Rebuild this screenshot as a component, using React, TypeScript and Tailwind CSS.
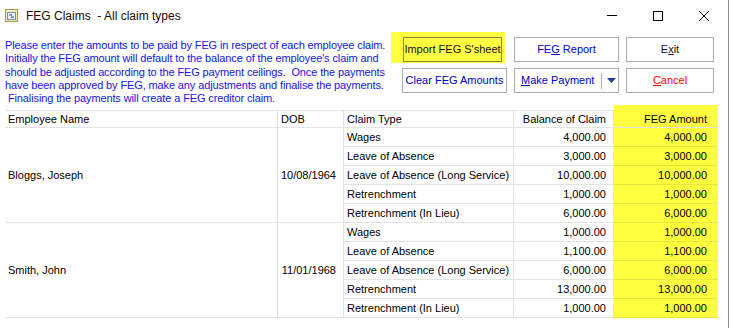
import React from "react";

interface Claim {
  type: string;
  balance: string;
  feg: string;
}

interface Employee {
  name: string;
  dob: string;
  claims: Claim[];
}

const EMPLOYEES: Employee[] = [
  {
    name: "Bloggs, Joseph",
    dob: "10/08/1964",
    claims: [
      { type: "Wages", balance: "4,000.00", feg: "4,000.00" },
      { type: "Leave of Absence", balance: "3,000.00", feg: "3,000.00" },
      { type: "Leave of Absence (Long Service)", balance: "10,000.00", feg: "10,000.00" },
      { type: "Retrenchment", balance: "1,000.00", feg: "1,000.00" },
      { type: "Retrenchment (In Lieu)", balance: "6,000.00", feg: "6,000.00" },
    ],
  },
  {
    name: "Smith, John",
    dob: "11/01/1968",
    claims: [
      { type: "Wages", balance: "1,000.00", feg: "1,000.00" },
      { type: "Leave of Absence", balance: "1,100.00", feg: "1,100.00" },
      { type: "Leave of Absence (Long Service)", balance: "6,000.00", feg: "6,000.00" },
      { type: "Retrenchment", balance: "13,000.00", feg: "13,000.00" },
      { type: "Retrenchment (In Lieu)", balance: "1,000.00", feg: "1,000.00" },
    ],
  },
];

const INSTRUCTIONS = [
  "Please enter the amounts to be paid by FEG in respect of each employee claim.",
  "Initially the FEG amount will default to the balance of the employee's claim and",
  "should be adjusted according to the FEG payment ceilings.  Once the payments",
  "have been approved by FEG, make any adjustments and finalise the payments.",
  " Finalising the payments will create a FEG creditor claim.",
];

const btn =
  "h-[25px] border border-[#adadad] bg-white flex items-center justify-center text-[#0000c8]";

export default function App() {
  return (
    <div className="w-[729px] h-[328px] overflow-hidden bg-white border-r border-[#8c8c8c] font-['Liberation_Sans',Tahoma,sans-serif] text-[11px] text-black">
      <TitleBar />

      <div className="flex h-[79px]">
        <div className="w-[391px] pl-[5px] pt-[8px] text-[#1515e6] leading-[13.3px] tracking-[-0.12px] whitespace-pre">
          {INSTRUCTIONS.map((line) => (
            <div key={line}>{line}</div>
          ))}
        </div>

        <div className="flex flex-col">
          <div className="flex items-start pt-[1px]">
            <div className="bg-[#ffff40] pl-[12px] pr-[3px] pt-[5px] pb-[1px]">
              <button className="h-[25px] w-[99px] border border-[#8a8a3a] flex items-center justify-center text-[#101020]">
                Import FEG S'sheet
              </button>
            </div>
            <button className={`${btn} w-[105px] ml-[9px] mt-[5px]`}>
              FE<u>G</u>&nbsp;Report
            </button>
            <button className={`${btn} w-[88px] ml-[7px] mt-[5px] text-[#101020]`}>
              E<u>x</u>it
            </button>
          </div>

          <div className="flex mt-[5px] pl-[11px]">
            <button className={`${btn} w-[105px]`}>Clear FEG Amounts</button>
            <button className={`${btn} w-[105px] ml-[7px] justify-start pl-[6px]`}>
              <span>
                <u>M</u>ake Payment
              </span>
              <span className="ml-[7px] h-[16px] w-px bg-[#adadad]" />
              <svg width="9" height="5" viewBox="0 0 9 5" className="ml-[5px]">
                <path d="M0 0h9L4.5 5z" fill="#1c3d9c" />
              </svg>
            </button>
            <button className={`${btn} w-[88px] ml-[7px] text-[#ff0000]`}>
              <u>C</u>ancel
            </button>
          </div>
        </div>
      </div>

      <ClaimsTable />
    </div>
  );
}

function TitleBar() {
  return (
    <div className="h-[31px] flex items-center font-['Liberation_Sans',sans-serif] text-[12px]">
      <svg width="13" height="13" viewBox="0 0 13 13" className="ml-[5px]">
        <rect x="0.5" y="0.5" width="12" height="12" fill="#f3e9b8" stroke="#a89a5a" />
        <rect x="2.5" y="3.5" width="8" height="7" fill="#e8eef8" stroke="#7d8fb3" />
        <path d="M4 6h3l-1-1M9 8H6l1 1" stroke="#2e5fc2" fill="none" />
      </svg>
      <span className="ml-[8px] text-[#1a0a0a] whitespace-pre">FEG Claims  - All claim types</span>

      <div className="ml-auto flex items-center">
        <div className="w-[46px] h-[30px] flex items-center justify-center">
          <div className="w-[10px] h-px bg-black" />
        </div>
        <div className="w-[46px] h-[30px] flex items-center justify-center">
          <div className="w-[10px] h-[10px] border border-black" />
        </div>
        <div className="w-[46px] h-[30px] flex items-center justify-center mr-[1px]">
          <svg width="10" height="10" viewBox="0 0 10 10">
            <path d="M0 0L10 10M10 0L0 10" stroke="black" strokeWidth="1" />
          </svg>
        </div>
      </div>
    </div>
  );
}

function ClaimsTable() {
  const cell = "border-r border-b border-[#e3e3e3] h-[19px] px-[3px]";
  return (
    <div className="ml-[5px] w-[713px]">
      <div className="relative flex h-[18px] border-t border-b border-[#e3e3e3] items-center">
        <div className="w-[273px] pl-[3px] border-r border-[#e3e3e3] h-full flex items-center">Employee Name</div>
        <div className="w-[66px] pl-[3px] border-r border-[#e3e3e3] h-full flex items-center">DOB</div>
        <div className="w-[170px] pl-[3px] border-r border-[#e3e3e3] h-full flex items-center">Claim Type</div>
        <div className="w-[100px] pr-[7px] border-r border-[#e3e3e3] h-full flex items-center justify-end">Balance of Claim</div>
        <div className="w-[104px] pr-[11px] h-full flex items-center justify-end bg-[#ffff40]">FEG Amount</div>
        <div className="absolute right-0 top-[-6px] w-[104px] h-[6px] bg-[#ffff40]" />
      </div>

      {EMPLOYEES.map((emp) => (
        <div key={emp.name} className="flex">
          <div className="w-[273px] pl-[3px] border-r border-b border-[#e3e3e3] flex items-center">{emp.name}</div>
          <div className="w-[66px] pr-[7px] border-r border-b border-[#e3e3e3] flex items-center justify-end">{emp.dob}</div>
          <div className="flex flex-col">
            {emp.claims.map((c) => (
              <div key={c.type} className="flex">
                <div className={`${cell} w-[170px] flex items-center`}>{c.type}</div>
                <div className={`${cell} w-[100px] flex items-center justify-end pr-[7px]`}>{c.balance}</div>
                <div className="h-[19px] w-[104px] border-b border-[#e8e83a] bg-[#ffff40] flex items-center justify-end pr-[11px]">
                  {c.feg}
                </div>
              </div>
            ))}
          </div>
        </div>
      ))}
    </div>
  );
}
